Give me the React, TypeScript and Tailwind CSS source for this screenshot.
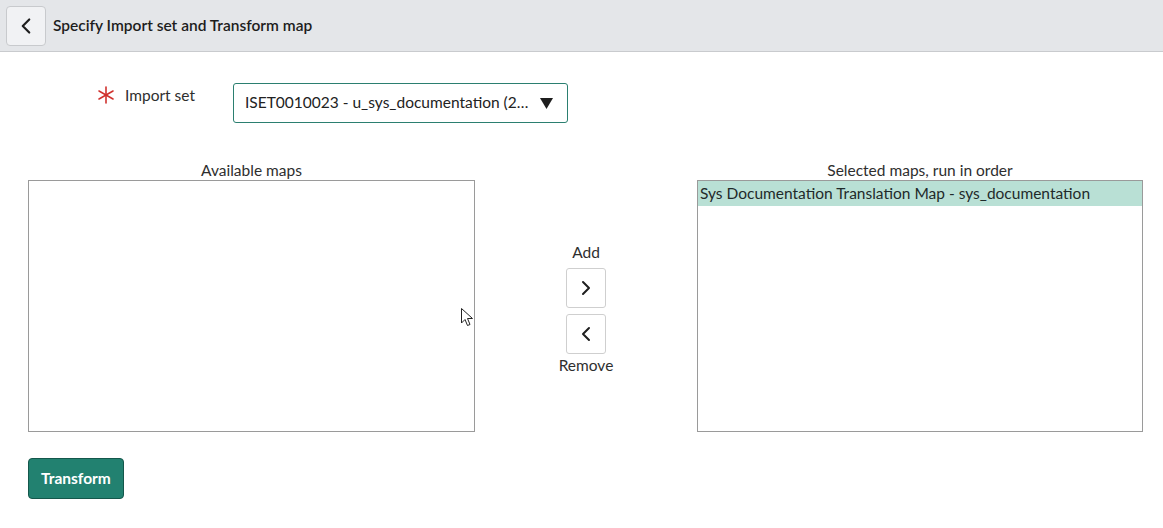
import { ChevronLeft, ChevronRight } from 'lucide-react'

const font = { fontFamily: 'Lato, "Liberation Sans", sans-serif' }

function MapBox({ label, items }: { label: string; items: string[] }) {
  return (
    <div className="flex flex-col">
      <div className="h-[20px] text-center text-[15.5px] leading-[20px] text-[#2e2e2e]">{label}</div>
      <div className="h-[252px] border border-[#9a9a9a] bg-white">
        {items.map((it) => (
          <div key={it} className="bg-[#b9e0d5] px-[2px] h-[25px] text-[15.5px] leading-[25px] text-[#1f2a2a] whitespace-nowrap overflow-hidden">{it}</div>
        ))}
      </div>
    </div>
  )
}

function MoveButton({ dir }: { dir: 'add' | 'remove' }) {
  return (
    <button className="flex h-[40px] w-[40px] items-center justify-center rounded-[3px] border border-[#cfcfcf] bg-white text-[#1f1f1f]">
      {dir === 'add' ? <ChevronRight size={24} strokeWidth={2} /> : <ChevronLeft size={24} strokeWidth={2} />}
    </button>
  )
}

export default function App() {
  return (
    <div className="relative h-[528px] w-[1163px] overflow-hidden bg-white" style={font}>
      <header className="flex h-[52px] items-center gap-[7px] border-b border-[#c9cbce] bg-[#e4e6e9] pl-[6px]">
        <button className="flex h-[40px] w-[40px] items-center justify-center rounded-[4px] border border-[#c8cacd] bg-[#f1f2f4] text-[#1e1e1e]">
          <ChevronLeft size={26} strokeWidth={2} />
        </button>
        <h1 className="text-[15.5px] font-semibold text-[#1d1d1d]">Specify Import set and Transform map</h1>
      </header>

      <div className="flex items-start pt-[31px] pl-[97px]">
        <div className="flex w-[136px] items-center gap-[10px]">
          <svg width="18" height="18" viewBox="0 0 18 18" className="text-[#d0312d]">
            <g stroke="currentColor" strokeWidth="1.6" strokeLinecap="round">
              <line x1="9" y1="1" x2="9" y2="17" />
              <line x1="2" y1="5" x2="16" y2="13" />
              <line x1="2" y1="13" x2="16" y2="5" />
            </g>
          </svg>
          <span className="text-[15.5px] leading-[24px] text-[#2e2e2e]">Import set</span>
        </div>
        <div className="flex h-[40px] w-[335px] items-center justify-between rounded-[3px] border border-[#2b7f70] pl-[11px] pr-[14px]">
          <span className="text-[15.5px] text-[#222]">ISET0010023 - u_sys_documentation (2…</span>
          <svg width="13" height="11" viewBox="0 0 13 11"><path d="M0 0 H13 L6.5 11 Z" fill="#1e1e1e" /></svg>
        </div>
      </div>

      <div className="grid grid-cols-[447px_1fr_446px] pt-[37px] pl-[28px] pr-[20px]">
        <MapBox label="Available maps" items={[]} />
        <div className="flex flex-col items-center justify-center pt-[24px] text-[15.5px] text-[#2e2e2e]">
          <div className="mb-[6px] leading-[20px]">Add</div>
          <MoveButton dir="add" />
          <div className="h-[6px]" />
          <MoveButton dir="remove" />
          <div className="mt-[1px] leading-[20px]">Remove</div>
        </div>
        <MapBox label="Selected maps, run in order" items={['Sys Documentation Translation Map - sys_documentation']} />
      </div>

      <div className="pt-[26px] pl-[28px]">
        <button className="h-[41px] rounded-[4px] border border-[#14574b] bg-[#228170] px-[12px] text-[15.5px] font-bold text-white">Transform</button>
      </div>

      <svg className="absolute left-[461px] top-[308px]" width="13" height="20" viewBox="0 0 13 20">
        <path d="M0.5 0.5 L0.5 15 L4 11.5 L6.5 17.5 L9 16.5 L6.5 10.5 L11.5 10.5 Z" fill="white" stroke="#222" strokeWidth="1" />
      </svg>
    </div>
  )
}
